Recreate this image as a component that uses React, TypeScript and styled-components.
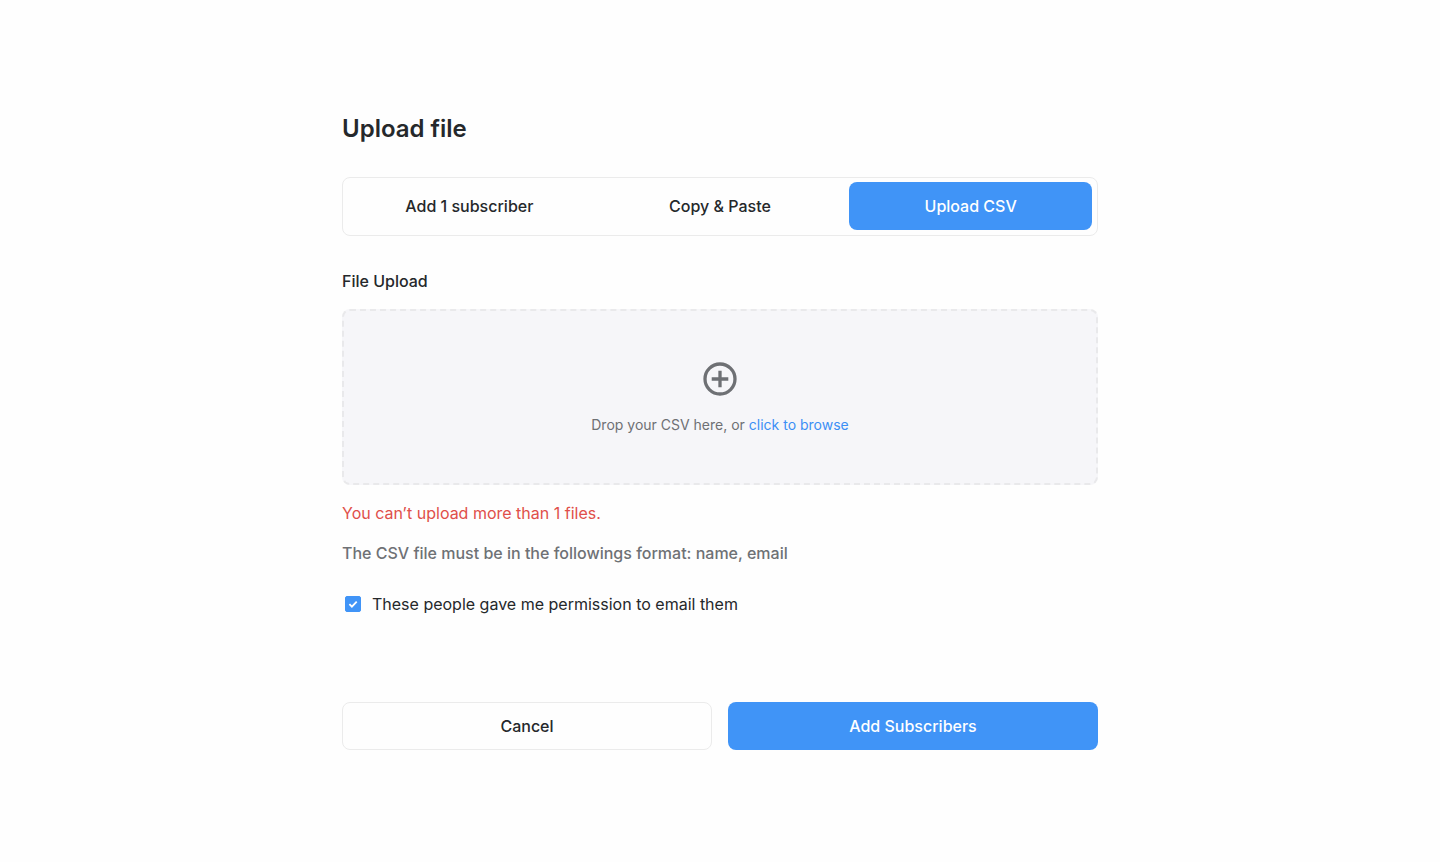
import React, { useState } from "react";
import styled, { createGlobalStyle, css } from "styled-components";

const GlobalStyle = createGlobalStyle`
  *, *::before, *::after { box-sizing: border-box; }
  body {
    margin: 0;
    background: #fefefe;
    color: #25282b;
    font-family: Inter, "Liberation Sans", sans-serif;
    font-size: 16px;
    line-height: 24px;
  }
`;

const Page = styled.main`
  display: flex;
  justify-content: center;
  padding: 112px 24px 96px;
`;

const UploadForm = styled.form`
  width: 100%;
  max-width: 756px;
`;

const Title = styled.h1`
  margin: 0 0 31px;
  font-size: 24px;
  line-height: 34px;
  font-weight: 600;
`;

const Tabs = styled.div`
  display: grid;
  grid-template-columns: repeat(3, 1fr);
  gap: 8px;
  padding: 4px 5px 5px;
  border: 1px solid #ebebeb;
  border-radius: 8px;
`;

const Button = styled.button<{ $filled?: boolean; $outlined?: boolean }>`
  height: 48px;
  padding: 0 16px;
  border: ${({ $outlined }) => ($outlined ? "1px solid #ebebeb" : "0")};
  border-radius: 8px;
  background: transparent;
  color: inherit;
  font: inherit;
  font-weight: 500;
  cursor: pointer;
  ${({ $filled }) =>
    $filled &&
    css`
      background: #4094f7;
      color: #fff;
    `}
`;

const FieldLabel = styled.h2`
  margin: 33px 0 16px;
  font-size: 16px;
  line-height: 24px;
  font-weight: 500;
`;

const DropZone = styled.div`
  display: flex;
  flex-direction: column;
  align-items: center;
  gap: 16px;
  padding: 48px 24px;
  border: 2px dashed #e9e9eb;
  border-radius: 8px;
  background: #f6f6f9;
  color: #6e7074;
`;

const PlusIcon = styled.svg`
  display: block;
  width: 40px;
  height: 40px;
`;

const DropText = styled.p`
  margin: 0;
  font-size: 14px;
  line-height: 20px;
`;

const BrowseLink = styled.a`
  color: #3c8ff5;
  text-decoration: none;
`;

const Message = styled.p<{ $error?: boolean }>`
  margin: 16px 0 0;
  color: ${({ $error }) => ($error ? "#e04f4a" : "#6e7175")};
  font-weight: ${({ $error }) => ($error ? 400 : 500)};
`;

const Consent = styled.label`
  display: flex;
  align-items: center;
  gap: 11px;
  margin-top: 27px;
  padding-left: 3px;
`;

const Checkbox = styled.input`
  width: 16px;
  height: 16px;
  margin: 0;
  appearance: none;
  border: 1px solid #4094f7;
  border-radius: 2px;
  grid-area: 1 / 1;
  &:checked { background: #4094f7; }
`;

const CheckboxBox = styled.span`
  display: grid;
  place-items: center;
`;

const Tick = styled.svg`
  grid-area: 1 / 1;
  width: 16px;
  height: 16px;
  z-index: 1;
  pointer-events: none;
`;

const Actions = styled.div`
  display: grid;
  grid-template-columns: repeat(2, 1fr);
  gap: 16px;
  margin-top: 86px;
`;

const tabs = ["Add 1 subscriber", "Copy & Paste", "Upload CSV"];

export default function App() {
  const [active, setActive] = useState("Upload CSV");
  const [allowed, setAllowed] = useState(true);

  return (
    <>
      <GlobalStyle />
      <Page>
        <UploadForm onSubmit={(e) => e.preventDefault()}>
          <Title>Upload file</Title>
          <Tabs role="tablist">
            {tabs.map((tab) => (
              <Button
                key={tab}
                type="button"
                role="tab"
                aria-selected={tab === active}
                $filled={tab === active}
                onClick={() => setActive(tab)}
              >
                {tab}
              </Button>
            ))}
          </Tabs>
          <FieldLabel>File Upload</FieldLabel>
          <DropZone>
            <PlusIcon viewBox="0 0 40 40" fill="none" stroke="currentColor" strokeWidth="3.3" aria-hidden="true">
              <circle cx="20" cy="20" r="15" />
              <path d="M20 11.7v16.6M11.7 20h16.6" />
            </PlusIcon>
            <DropText>
              Drop your CSV here, or <BrowseLink href="#browse">click to browse</BrowseLink>
            </DropText>
          </DropZone>
          <Message $error role="alert">You can’t upload more than 1 files.</Message>
          <Message>The CSV file must be in the followings format: name, email</Message>
          <Consent>
            <CheckboxBox>
              <Checkbox type="checkbox" checked={allowed} onChange={(e) => setAllowed(e.target.checked)} />
              {allowed && (
                <Tick viewBox="0 0 16 16" fill="none" stroke="#fff" strokeWidth="1.8" aria-hidden="true">
                  <path d="M4.4 8.1l2.5 2.5 4.8-5" />
                </Tick>
              )}
            </CheckboxBox>
            These people gave me permission to email them
          </Consent>
          <Actions>
            <Button type="button" $outlined>Cancel</Button>
            <Button type="submit" $filled>Add Subscribers</Button>
          </Actions>
        </UploadForm>
      </Page>
    </>
  );
}
